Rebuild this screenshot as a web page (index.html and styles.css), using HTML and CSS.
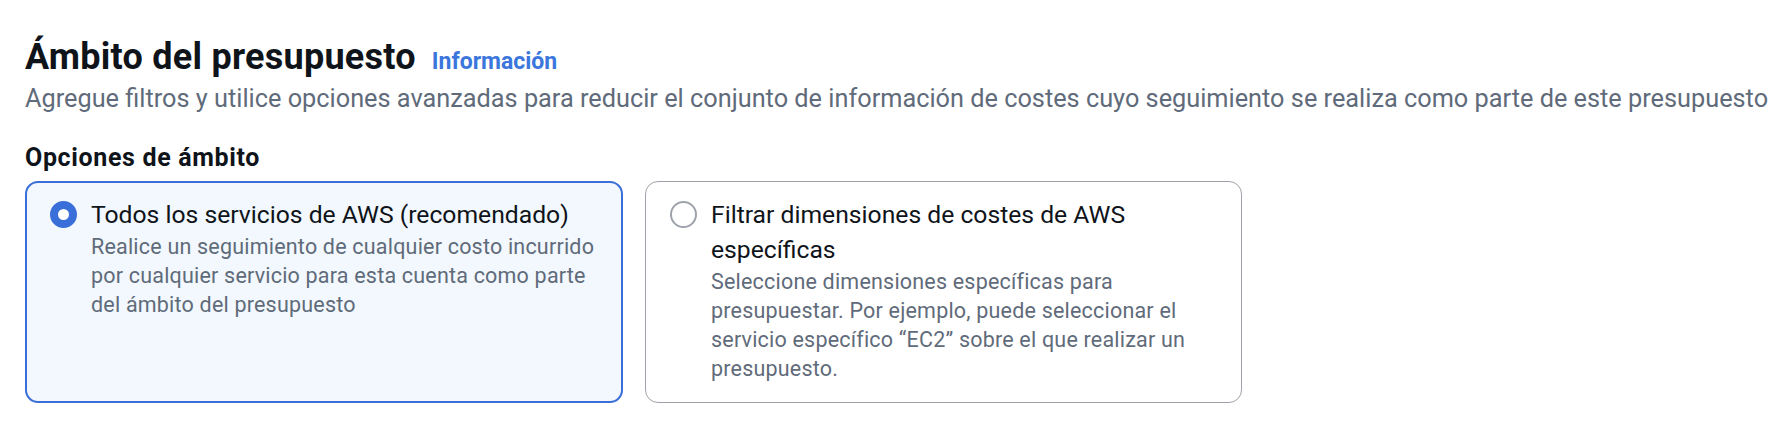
FILE: index.html
```html
<!DOCTYPE html>
<html lang="es">
<head>
<meta charset="utf-8">
<title>Ámbito del presupuesto</title>
<link rel="stylesheet" href="styles.css">
</head>
<body>
<div class="page">
  <div class="header">
    <h2 class="title">Ámbito del presupuesto</h2>
    <a class="info" href="#">Información</a>
  </div>
  <p class="subtitle">Agregue filtros y utilice opciones avanzadas para reducir el conjunto de información de costes cuyo seguimiento se realiza como parte de este presupuesto</p>
  <div class="field-label">Opciones de ámbito</div>
  <div class="tiles">
    <div class="tile selected">
      <span class="radio checked"></span>
      <div class="tile-text">
        <div class="tile-label">Todos los servicios de AWS (recomendado)</div>
        <div class="tile-desc">Realice un seguimiento de cualquier costo incurrido<br>por cualquier servicio para esta cuenta como parte<br>del ámbito del presupuesto</div>
      </div>
    </div>
    <div class="tile">
      <span class="radio"></span>
      <div class="tile-text">
        <div class="tile-label">Filtrar dimensiones de costes de AWS<br>específicas</div>
        <div class="tile-desc">Seleccione dimensiones específicas para<br>presupuestar. Por ejemplo, puede seleccionar el<br>servicio específico “EC2” sobre el que realizar un<br>presupuesto.</div>
      </div>
    </div>
  </div>
</div>
</body>
</html>
```
FILE: styles.css
```css
* { box-sizing: border-box; }
html, body { margin: 0; padding: 0; background: #ffffff; }
body { font-family: Roboto, "Liberation Sans", sans-serif; color: #000716; }
.page { padding: 35px 0 0 25px; }
.header { display: flex; align-items: baseline; gap: 16px; height: 44px; }
.title { margin: 0; font-size: 36px; line-height: 44px; font-weight: 700; letter-spacing: 0.25px; color: #0f141a; }
.info { font-size: 23px; font-weight: 700; color: #3b76dc; text-decoration: none; }
.subtitle { margin: 3px 0 0; font-size: 25.3px; line-height: 34px; color: #5f6b7a; }
.field-label { margin-top: 25px; font-size: 25px; line-height: 34px; font-weight: 700; letter-spacing: 0.65px; color: #0f141a; }
.tiles { display: grid; grid-template-columns: 598px 597px; gap: 22px; margin-top: 6px; }
.tile { display: flex; gap: 14px; height: 222px; border: 1px solid #9ea2aa; border-radius: 13px; padding: 14.5px 10px 0 24px; background: #ffffff; }
.tile.selected { border: 2px solid #3a6fd9; background: #f2f8fd; padding: 13.5px 9px 0 23px; }
.radio { flex: none; width: 27px; height: 27px; margin-top: 4px; border-radius: 50%; border: 2px solid #9ea2aa; background: #fff; }
.radio.checked { border: 8.5px solid #3a6fd9; }
.tile-text { flex: 1; min-width: 0; white-space: nowrap; }
.tile-label { font-size: 24.7px; line-height: 35px; color: #0f141a; }
.tile-desc { font-size: 21.5px; line-height: 29px; letter-spacing: 0.2px; color: #5f6b7a; }
```
